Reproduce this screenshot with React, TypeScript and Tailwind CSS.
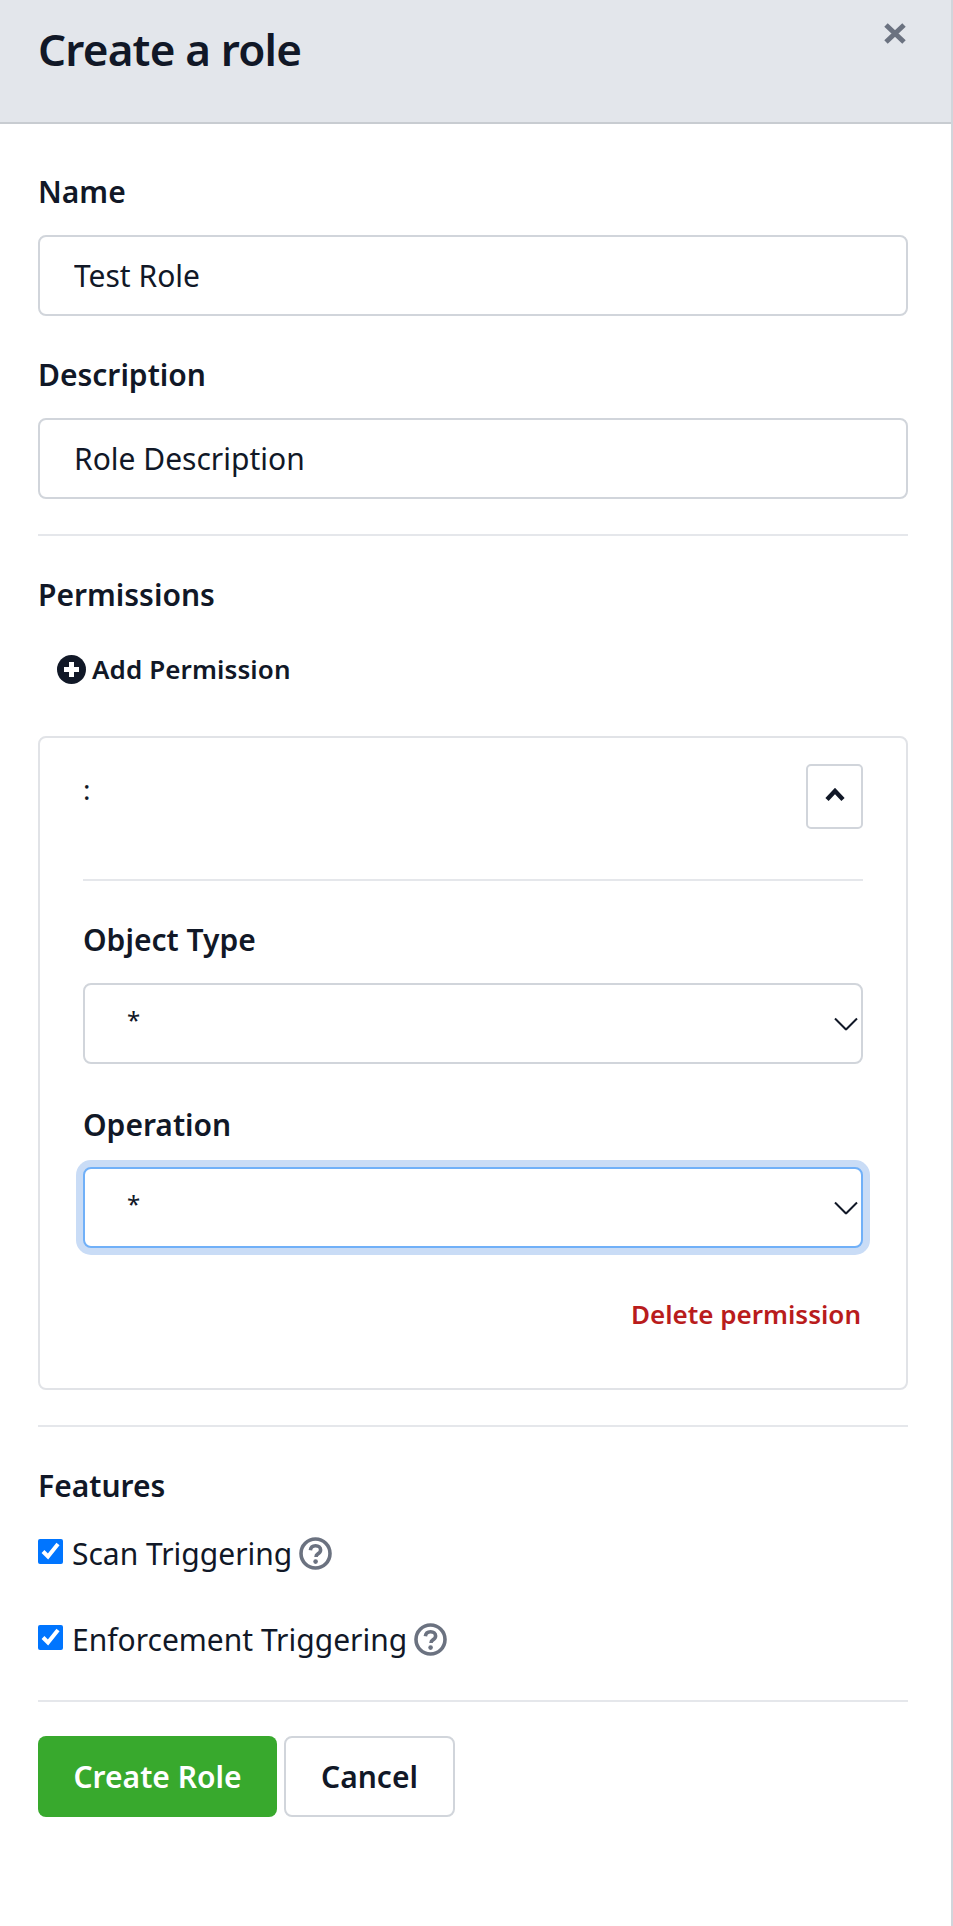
import React from "react";

function Label({ children, className = "" }: { children: React.ReactNode; className?: string }) {
  return <div className={`h-[36px] text-[30px] leading-[36px] font-semibold text-[#111827] ${className}`}>{children}</div>;
}

function Divider({ className = "" }: { className?: string }) {
  return <hr className={`border-0 border-t-2 border-[#e5e7eb] ${className}`} />;
}

function TextBox({ value }: { value: string }) {
  return (
    <input
      defaultValue={value}
      className="mt-[25px] block w-full h-[81px] rounded-[8px] border-2 border-[#d1d5db] bg-white pl-[34px] text-[30px] text-[#111827] outline-none"
    />
  );
}

function Chevron() {
  return (
    <svg className="absolute right-[5px] top-1/2 -translate-y-1/2 w-[24px] h-[13px]" viewBox="0 0 24 13" fill="none" stroke="#111827" strokeWidth="2">
      <path d="M1 1 L12 12 L23 1" />
    </svg>
  );
}

function SelectBox({ focused = false, className = "" }: { focused?: boolean; className?: string }) {
  return (
    <div className={`relative ${className}`}>
      <select
        defaultValue="*"
        className={`block w-full h-[81px] appearance-none rounded-[8px] border-2 bg-white pl-[42px] pb-[8px] text-[24px] text-[#111827] outline-none ${focused ? "border-[#70b0f8] shadow-[0_0_0_7px_#c9dcf6]" : "border-[#d1d5db]"}`}
      >
        <option value="*">*</option>
      </select>
      <Chevron />
    </div>
  );
}

function Help() {
  return (
    <svg className="ml-[7px] w-[33px] h-[33px] shrink-0" viewBox="0 0 33 33" fill="none">
      <circle cx="16.5" cy="16.5" r="14.5" stroke="#6b7280" strokeWidth="3.6" />
      <path d="M11.4 13.2c.3-2.8 2.4-4.4 5.2-4.4 2.9 0 5 1.7 5 4.2 0 2-1.2 3-2.7 3.9-1.3.8-1.9 1.4-1.9 3" stroke="#6b7280" strokeWidth="3.6" />
      <circle cx="16.6" cy="24.6" r="2.3" fill="#6b7280" />
    </svg>
  );
}

function Feature({ label, className = "" }: { label: string; className?: string }) {
  return (
    <div className={`flex items-center h-[36px] ${className}`}>
      <input type="checkbox" defaultChecked className="m-0 mb-[3px] w-[25px] h-[25px]" />
      <span className="ml-[9px] text-[30px] text-[#111827] whitespace-nowrap">{label}</span>
      <Help />
    </div>
  );
}

export default function App() {
  return (
    <div className="w-[953px] h-[1926px] bg-white border-r-2 border-[#d1d5db] font-['Noto_Sans','Liberation_Sans',sans-serif] overflow-hidden">
      <header className="relative h-[124px] bg-[#e3e6eb] border-b-2 border-[#c8ccd1] pl-[38px]">
        <h1 className="pt-[22px] text-[44px] leading-[54px] font-semibold tracking-[-0.8px] text-[#111827]">Create a role</h1>
        <svg className="absolute right-[44px] top-[22px] w-[24px] h-[23px]" viewBox="0 0 24 23" fill="none" stroke="#6b7280" strokeWidth="5">
          <path d="M3 3 L21 20 M21 3 L3 20" />
        </svg>
      </header>

      <main className="pl-[38px] pr-[43px]">
        <Label className="mt-[50px]">Name</Label>
        <TextBox value="Test Role" />
        <Label className="mt-[41px]">Description</Label>
        <TextBox value="Role Description" />
        <Divider className="mt-[35px]" />

        <Label className="mt-[41px]">Permissions</Label>
        <button className="mt-[38px] ml-[19px] flex items-center h-[36px] text-[#111827]">
          <svg className="w-[29px] h-[29px]" viewBox="0 0 29 29">
            <circle cx="14.5" cy="14.5" r="14.5" fill="#111827" />
            <path d="M14.5 7v15M7 14.5h15" stroke="#fff" strokeWidth="5" />
          </svg>
          <span className="ml-[6px] text-[26px] font-semibold tracking-[0.1px]">Add Permission</span>
        </button>

        <section className="mt-[49px] h-[654px] rounded-[8px] border-2 border-[#e1e3e7] pl-[43px] pr-[43px] pt-[26px]">
          <div className="flex justify-between items-start h-[65px]">
            <span className="mt-[7px] text-[28px] leading-[36px] text-[#111827]">:</span>
            <button className="flex items-center justify-center w-[57px] h-[65px] rounded-[5px] border-2 border-[#d1d5db] bg-white">
              <svg className="w-[20px] h-[13px] -translate-y-[2px]" viewBox="0 0 20 13" fill="none" stroke="#111827" strokeWidth="4.4">
                <path d="M2 11.5 L10 3 L18 11.5" />
              </svg>
            </button>
          </div>
          <Divider className="mt-[50px]" />
          <Label className="mt-[41px]">Object Type</Label>
          <SelectBox className="mt-[25px]" />
          <Label className="mt-[43px]">Operation</Label>
          <SelectBox focused className="mt-[24px]" />
          <div className="mt-[48px] h-[36px] text-right leading-[36px] text-[26px] font-semibold text-[#b91c1c] pr-[2px]">Delete permission</div>
        </section>

        <Divider className="mt-[35px]" />
        <Label className="mt-[41px]">Features</Label>
        <Feature label="Scan Triggering" className="mt-[31px]" />
        <Feature label="Enforcement Triggering" className="mt-[50px]" />
        <Divider className="mt-[43px]" />

        <div className="mt-[34px] flex gap-[7px]">
          <button className="w-[239px] h-[81px] rounded-[8px] bg-[#38a92d] text-[30px] font-semibold text-white">Create Role</button>
          <button className="w-[171px] h-[81px] rounded-[8px] border-2 border-[#d1d5db] bg-white text-[30px] font-semibold text-[#111827]">Cancel</button>
        </div>
      </main>
    </div>
  );
}
